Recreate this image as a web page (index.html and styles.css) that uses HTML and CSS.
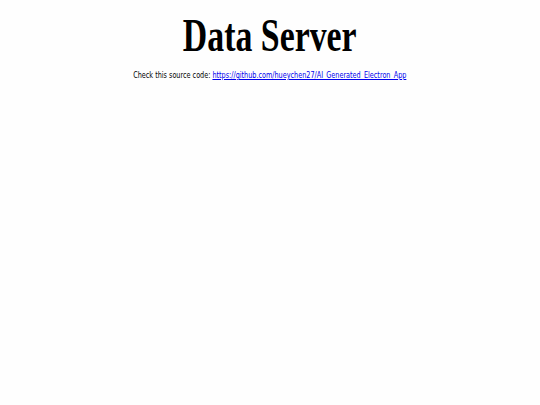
FILE: index.html
```html
<!DOCTYPE html>
<html>
<head>
<meta charset="utf-8">
<link rel="stylesheet" href="styles.css">
</head>
<body>
<h1 class="title"><span class="title-text">Data Server</span></h1>
<p class="source"><span class="source-text">Check this source code: <a class="link" href="https://github.com/hueychen27/AI_Generated_Electron_App">https://github.com/hueychen27/AI_Generated_Electron_App</a></span></p>
</body>
</html>
```
FILE: styles.css
```css
html, body {
  margin: 0;
  background: #fefefe;
}
body {
  padding: 8px;
}
.title {
  margin: 0;
  padding-top: 2px;
  text-align: center;
  font-family: "Liberation Serif", serif;
  font-weight: bold;
  font-size: 47px;
  line-height: 50px;
  color: #000;
}
.title-text {
  display: inline-block;
  transform: scaleX(0.72);
}
.source {
  margin: 8px 0 0;
  text-align: center;
  font-family: "DejaVu Sans Condensed", "DejaVu Sans", sans-serif;
  font-size: 9px;
  line-height: 14px;
  color: #000;
}
.source-text {
  display: inline-block;
  white-space: nowrap;
  transform: scaleX(0.8);
}
.link {
  color: #0000ee;
}
```
